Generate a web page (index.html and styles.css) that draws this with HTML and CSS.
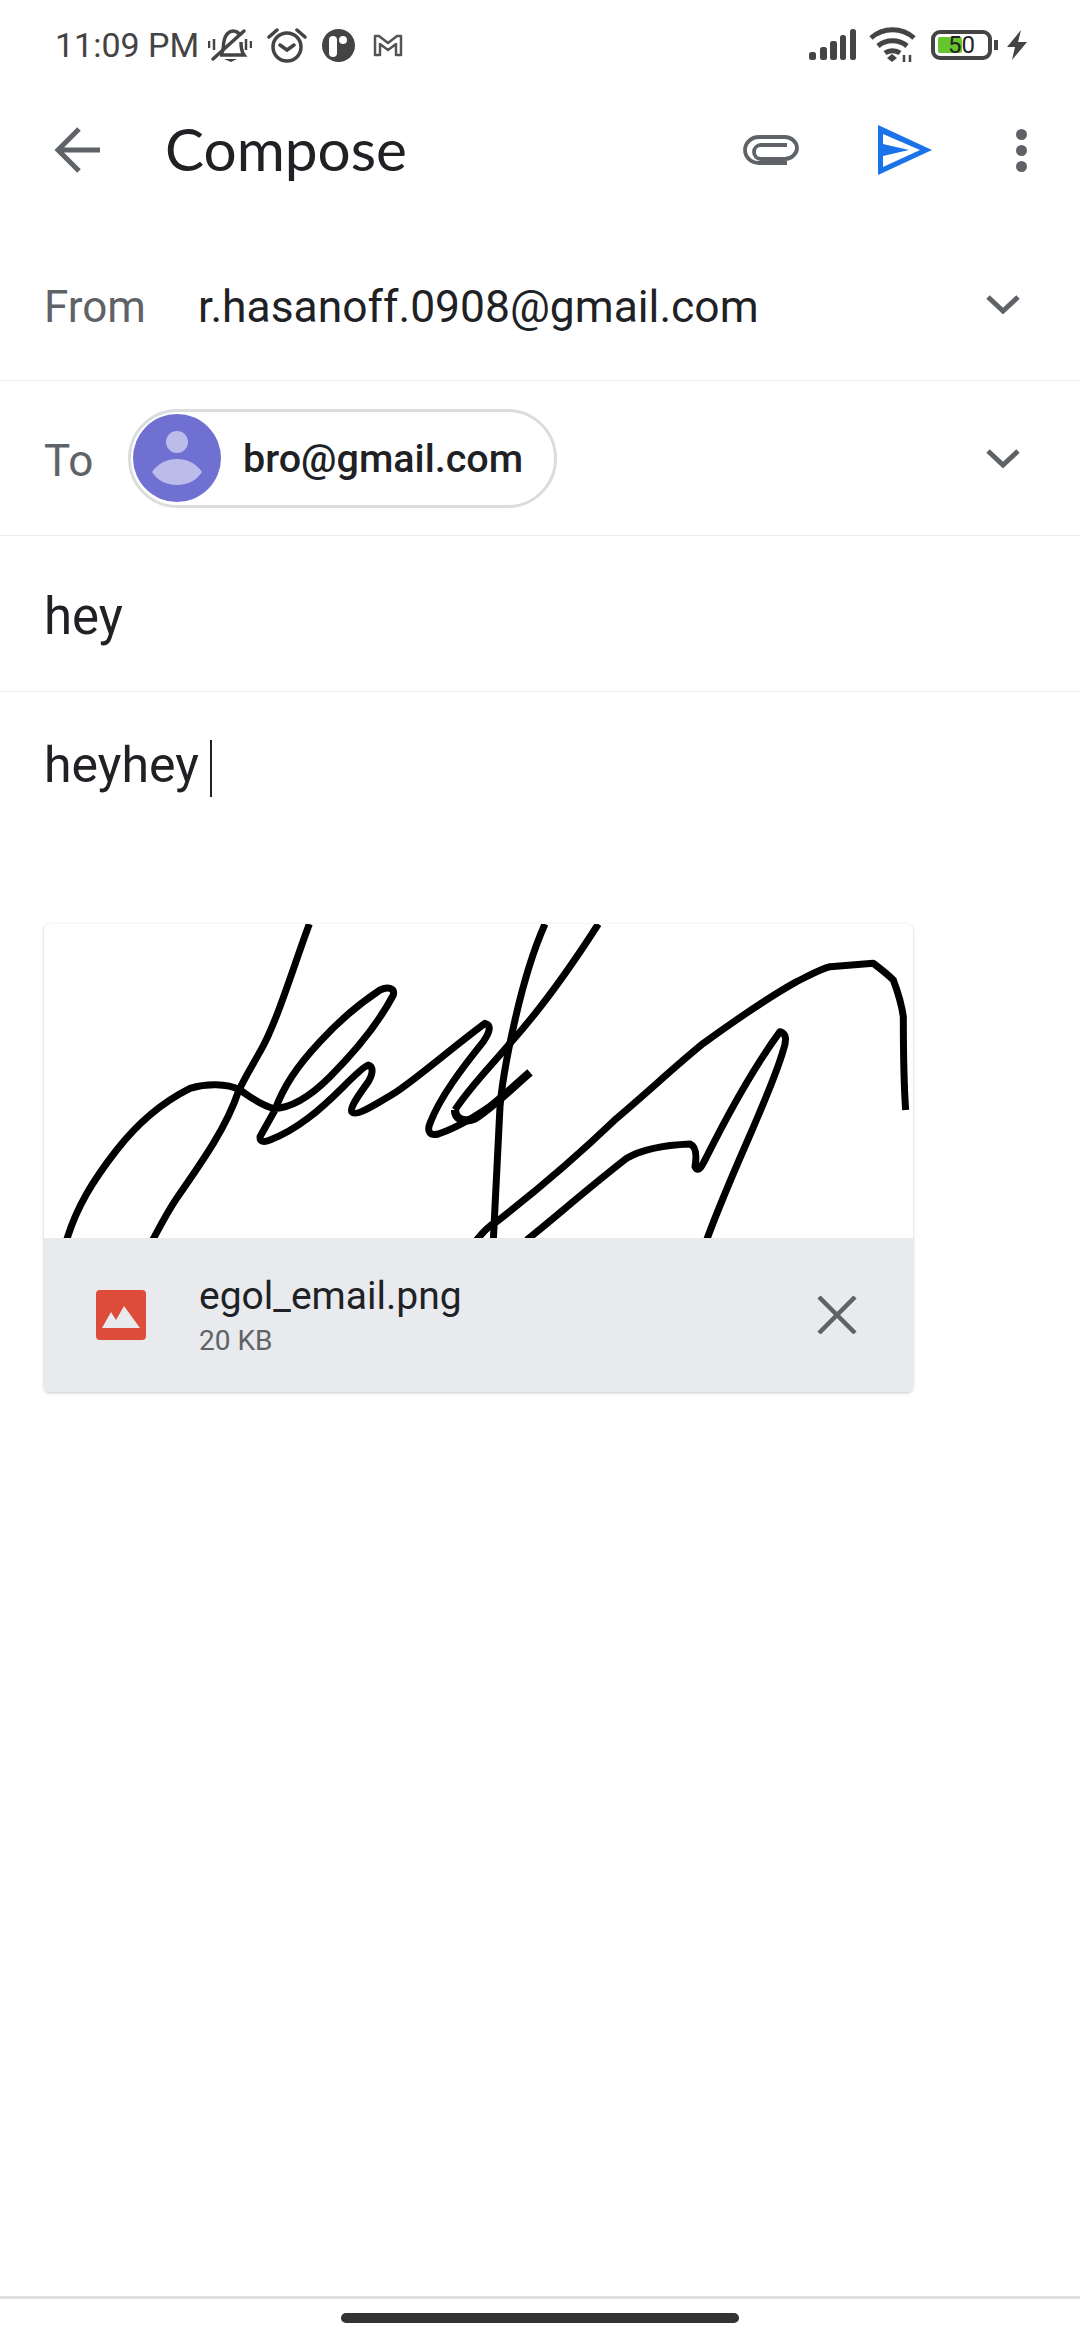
FILE: index.html
```html
<!DOCTYPE html>
<html lang="en">
<head>
  <meta charset="UTF-8">
  <meta name="viewport" content="width=device-width, initial-scale=1.0">
  <title>Compose</title>
  <link rel="stylesheet" href="styles.css">
</head>
<body>
  <div class="status-bar">
    <span class="clock">11:09 PM</span>
    <svg class="st-icon mute" width="44" height="38" viewBox="0 0 44 38" fill="none" stroke="#444" stroke-width="3.5">
      <path d="M13 26c3-3 2-8 3-13 1-6 5-10 9-10 3 0 6 2 7 5M33 14c0 5 0 9 3 13H12"/>
      <path d="M16 31h13l-6 3z" fill="#444" stroke="none"/>
      <path d="M5 31L36 3" stroke-linecap="round"/>
      <path d="M1 13v7M6 11v11M38 11v11M43 13v7" stroke-width="2.5"/>
    </svg>
    <svg class="st-icon alarm" width="40" height="36" viewBox="0 0 40 36" fill="none" stroke="#444" stroke-width="3.5">
      <circle cx="20" cy="20" r="14"/>
      <path d="M13 18l7 5 7-5M2 10l8-7M38 10l-8-7" stroke-linecap="round"/>
    </svg>
    <svg class="st-icon dot-app" width="33" height="33" viewBox="0 0 33 33">
      <circle cx="16.500" cy="16.500" r="16.500" fill="#444"/>
      <rect x="7" y="7" width="8" height="21" rx="4" fill="#fff"/>
      <circle cx="21" cy="11" r="4" fill="#fff"/>
    </svg>
    <svg class="st-icon gmail" width="30" height="24" viewBox="0 0 30 24" fill="none" stroke="#555" stroke-width="2.500" stroke-linejoin="round">
      <path d="M2 3v19h5V11l8 6 8-6v11h5V3h-4l-9 7-9-7z"/>
    </svg>
    <span class="status-gap"></span>
    <svg class="st-icon signal" width="47" height="32" viewBox="0 0 47 32" fill="#444">
      <rect x="0" y="23" width="7" height="8" rx="2.500"/>
      <rect x="11" y="18" width="7" height="13" rx="2.500"/>
      <rect x="21" y="12" width="7" height="19" rx="2.500"/>
      <rect x="31" y="6" width="6" height="25" rx="2.500"/>
      <rect x="41" y="0" width="6" height="31" rx="2.500"/>
    </svg>
    <svg class="st-icon wifi" width="47" height="36" viewBox="0 0 47 36" fill="none" stroke="#444" stroke-width="5">
      <path d="M2 11c12-11 31-11 43 0M9 19c8-7 21-7 29 0M16 26c4-3 11-3 15 0"/>
      <path d="M18 31l5-4 5 4-5 4z" fill="#444" stroke="none"/>
      <path d="M35 28v7M41 28v7" stroke-width="2.500"/>
    </svg>
    <div class="battery"><div class="battery-fill"></div><span class="battery-num">50</span></div>
    <div class="battery-nub"></div>
    <svg class="st-icon bolt" width="20" height="30" viewBox="0 0 20 30" fill="#444"><path d="M14 0L0 17h8L5 30l15-18h-9z"/></svg>
  </div>

  <div class="toolbar">
    <svg class="back" width="46" height="46" viewBox="0 0 46 46" fill="none" stroke="#5f6368" stroke-width="5"><path d="M46 23H5M25 2L4 23l21 21"/></svg>
    <div class="toolbar-title">Compose</div>
    <svg class="clip" width="56" height="32" viewBox="0 0 56 32" fill="none" stroke="#5f6368" stroke-width="3.800"><path d="M44 29H16C8 29 2 23 2 16S8 3 16 3h26c6 0 12 5 12 11s-6 11-12 11H18c-4 0-7-3-7-7s3-7 7-7h26"/></svg>
    <svg class="send" width="54" height="50" viewBox="0 0 54 50"><path fill="#1a73e8" d="M0 0l54 25L0 50zM5 9v10l26 6-26 6v11l37-17z" fill-rule="evenodd"/></svg>
    <div class="more"><i></i><i></i><i></i></div>
  </div>

  <div class="row from-row">
    <span class="label from-label">From</span>
    <span class="from-mail">r.hasanoff.0908@gmail.com</span>
    <svg class="chevron" width="34" height="20" viewBox="0 0 34 20" fill="none" stroke="#5f6368" stroke-width="5"><path d="M2 3l15 14L32 3"/></svg>
  </div>
  <div class="row to-row">
    <span class="label to-label">To</span>
    <div class="chip">
      <svg class="avatar" width="88" height="88" viewBox="0 0 88 88">
        <circle cx="44" cy="44" r="44" fill="#7070d2"/>
        <ellipse cx="44" cy="28" rx="11" ry="11" fill="#bcbcea"/>
        <path d="M19 58c6-9 15-13 25-13s19 4 25 13c-5 8-14 13-25 13s-20-5-25-13z" fill="#bcbcea"/>
      </svg>
      <span class="chip-text">bro@gmail.com</span>
    </div>
    <svg class="chevron" width="34" height="20" viewBox="0 0 34 20" fill="none" stroke="#5f6368" stroke-width="5"><path d="M2 3l15 14L32 3"/></svg>
  </div>
  <div class="row subject-row">hey</div>

  <div class="body-text">heyhey<span class="cursor"></span></div>

  <div class="attachment">
    <svg class="signature" width="869" height="314" viewBox="0 0 869 314" fill="none" stroke="#000" stroke-linejoin="round" stroke-linecap="butt">
      <g transform="translate(-14 -14) scale(.33333)" stroke-width="21">
        <path d="M838 42C790 170 740 340 690 425C665 470 640 510 625 545C590 650 520 750 440 865C410 910 390 950 368 990"/>
        <path d="M110 990C140 890 190 810 260 720C330 630 400 575 480 535C530 520 590 520 630 540C660 560 690 585 730 595C780 595 840 560 900 500C970 430 1040 350 1090 255C1095 235 1075 228 1050 240C990 280 920 340 870 395C800 470 760 530 735 600L690 680C690 695 700 698 720 690C800 660 870 600 940 530C970 500 1000 470 1015 465C1030 470 1030 490 1015 515C990 550 960 590 965 605C975 620 1010 600 1100 545C1180 490 1270 410 1365 340C1385 345 1380 365 1360 395C1300 470 1230 560 1200 640C1190 665 1200 678 1225 672C1290 650 1350 610 1410 570"/>
      </g>
      <g transform="translate(406 -14) scale(.33333)" stroke-width="21">
        <path d="M15 600C60 530 130 460 180 400C270 300 350 190 445 42"/>
        <path d="M285 42C250 120 220 220 195 330C170 440 155 530 150 590L130 990"/>
        <path d="M15 600C15 625 40 640 75 625C130 590 190 530 240 487" stroke-width="25"/>
        <path d="M80 990C100 965 120 945 140 935C250 850 380 740 500 625C600 540 680 465 760 400C850 335 950 265 1040 215C1080 195 1110 178 1140 170L1270 160C1290 175 1310 190 1330 210C1345 250 1355 285 1360 320C1360 400 1360 500 1367 600"/>
        <path d="M230 990C300 935 420 830 530 745C580 715 650 705 720 702C740 710 740 740 735 770C745 790 755 770 770 740C840 600 920 460 990 365C1010 370 1010 390 1000 420C960 560 850 770 770 990"/>
      </g>
    </svg>
    <div class="attach-info">
      <svg class="file-icon" width="50" height="50" viewBox="0 0 50 50">
        <rect width="50" height="50" rx="4" fill="#dd4b39"/>
        <path fill="#e8eaed" d="M6 38l9-16 5 8 8-14 16 22z"/>
      </svg>
      <div class="file-text">
        <div class="file-name">egol_email.png</div>
        <div class="file-size">20 KB</div>
      </div>
      <svg class="close" width="40" height="38" viewBox="0 0 40 38" fill="none" stroke="#5f6368" stroke-width="4.500"><path d="M2 1l36 36M38 1L2 37"/></svg>
    </div>
  </div>

  <div class="spacer"></div>
  <div class="nav-bar"><div class="home-pill"></div></div>
</body>
</html>
```

FILE: styles.css
```css
*{
  box-sizing: border-box;
}
html,
body{
  margin: 0;
  height: 2340px;
  background-color: #fff;
}
body{
  width: 1080px;
  display: flex;
  flex-direction: column;
  font-family: Roboto, sans-serif;
  color: #202124;
}
svg{
  display: block;
  flex: none;
}
.status-bar{
  height: 90px;
  display: flex;
  align-items: center;
  padding: 0 0 0 55px;
  color: #444;
}
.clock{
  font-size: 34px;
  width: 153px;
  white-space: nowrap;
}
.mute{
  margin-top: 3px;
}
.alarm{
  margin-left: 15px;
}
.dot-app{
  margin-left: 15px;
}
.gmail{
  margin-left: 18px;
}
.status-gap{
  flex: 1;
}
.signal{
  margin-right: 13px;
}
.wifi{
  margin-right: 15px;
}
.battery{
  position: relative;
  width: 61px;
  height: 30px;
  border: 4px solid #444;
  border-radius: 9px;
  padding: 3px;
}
.battery-fill{
  width: 24px;
  height: 16px;
  background-color: #66c52d;
  border-radius: 2px;
}
.battery-num{
  position: absolute;
  left: 13px;
  top: -4px;
  font-size: 24px;
  line-height: 30px;
  color: #222;
}
.battery-nub{
  width: 4px;
  height: 10px;
  margin-left: 2px;
  background-color: #444;
}
.bolt{
  margin-left: 9px;
  margin-right: 53px;
}
.toolbar{
  height: 120px;
  display: flex;
  align-items: center;
  padding-left: 54px;
}
.toolbar-title{
  font-family: Lato, sans-serif;
  font-size: 58.500px;
  margin: -4px 0 0 65px;
  flex: 1;
}
.clip{
  margin-right: 79px;
}
.send{
  margin-right: 84px;
}
.more{
  display: flex;
  flex-direction: column;
  gap: 5px;
  margin-right: 53px;
}
.more i{
  width: 11px;
  height: 11px;
  border-radius: 50%;
  background-color: #5f6368;
}
.row{
  height: 155px;
  display: flex;
  align-items: center;
  padding-left: 44px;
  border-bottom: 1px solid #e8eaed;
  font-size: 51px;
}
.from-row{
  height: 171px;
  padding-top: 18px;
}
.subject-row{
  height: 156px;
  padding-top: 6px;
}
.label{
  color: #5f6368;
  font-size: 44px;
  margin-top: 5px;
}
.from-label{
  width: 154px;
}
.from-mail{
  flex: 1;
  font-size: 44.400px;
  margin-top: 5px;
}
.to-label{
  width: 84px;
}
.chip{
  display: flex;
  align-items: center;
  height: 99px;
  width: 429px;
  margin-right: auto;
  border: 3px solid #dadce0;
  border-radius: 50px;
  padding-left: 2px;
}
.chip-text{
  margin-left: 22px;
  font-size: 39.500px;
  font-weight: 500;
}
.chevron{
  margin-right: 60px;
}
.body-text{
  height: 232px;
  padding: 44px 0 0 44px;
  font-size: 50px;
  line-height: 58px;
}
.cursor{
  display: inline-block;
  width: 2px;
  height: 57px;
  margin-left: 11px;
  vertical-align: middle;
  background-color: #202124;
}
.attachment{
  width: 869px;
  margin-left: 44px;
  border-radius: 6px;
  overflow: hidden;
  box-shadow: 0 1px 3px rgba(60, 64, 67, 0.3);
}
.attach-info{
  height: 154px;
  display: flex;
  align-items: center;
  padding-left: 52px;
  background-color: #e8eaed;
}
.file-text{
  margin: 2px 0 0 53px;
  flex: 1;
}
.file-name{
  font-size: 39px;
  line-height: 46px;
}
.file-size{
  font-size: 28px;
  line-height: 36px;
  margin-top: 4px;
  color: #5f6368;
}
.close{
  margin-right: 56px;
}
.spacer{
  flex: 1;
}
.nav-bar{
  height: 44px;
  border-top: 3px solid #dfdfdf;
  display: flex;
  justify-content: center;
  padding-top: 14px;
}
.home-pill{
  width: 398px;
  height: 10px;
  border-radius: 5px;
  background-color: #333;
}
```
